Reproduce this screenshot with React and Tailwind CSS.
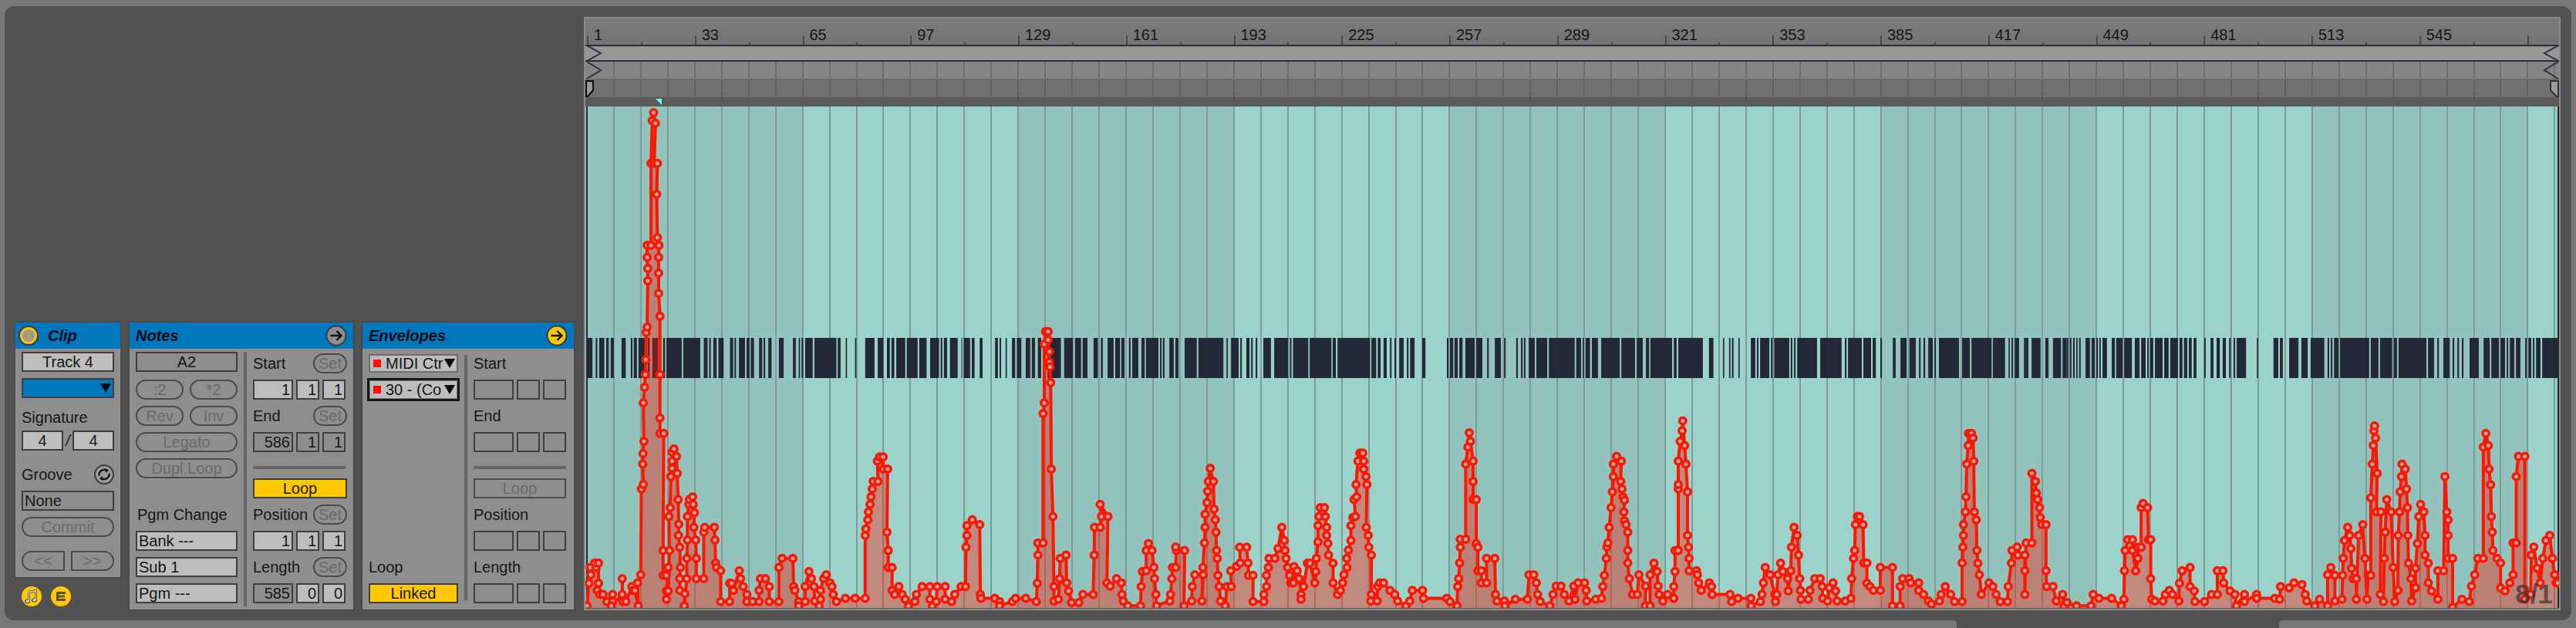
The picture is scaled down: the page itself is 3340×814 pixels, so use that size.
const GRID = Array.from({ length: 74 }, (_, i) => Math.round(761 + i * 34.95));
const BANDS = [
  [761, 1041, 0], [1041, 1321, 1], [1321, 1600, 0], [1600, 1880, 1], [1880, 2159, 0],
  [2159, 2439, 1], [2439, 2719, 0], [2719, 2999, 1], [2999, 3277, 0], [3277, 3318, 1],
];
const RULER = Array.from({ length: 18 }, (_, i) => 1 + i * 32);

// barcode runs, read off the zoomed crops as [origin, start, end, start, end...]
const BAR_RUNS = [
  [757, [10,27,37,42,48,64,70,78,84,94,118,131,147,152,156,166,171,191,200,206,214,232,248,254,258,306,311,364,375,387,392,397,405,415,421,437,457,467,471,476,485,504,509,518,522,532,548,558,562,567,577,587,610,625,654,663,672,676,681,686,692,716,721,790,794,803,819,823,848,852,880,909,919,937,948,957,962,971,977,1005,1010,1044,1049,1072,1083,1111,1116,1121,1126,1136,1145,1169,1181,1183,1188,1208,1213,1222,1238,1247,1286,1295,1300,1305,1319,1323,1339,1349,1354,1368,1382,1396,1401,1411,1420,1430,1450,1492,1502,1530,1536,1551]],
  [1400, [0,4,9,24,43,57,66,72,87,106,111,126,130,140,154,159,164,183,193,203,207,246,251,256,260,265,280,294,299,309,328,366,371,449,459,463,473,497,502,507,521,531,536,541,550,555,574,598,608,652,657,662,667,715,719,787,791,801,806,908,912,927,932,941,950,960,970,975,984,989,999,1013,1023,1028,1033,1047,1071,1081,1148,1153,1158,1168,1172,1182,1187,1197,1206,1235,1240,1259,1274,1279,1298,1317,1327,1332,1365,1370,1380,1385,1389,1394,1404,1423,1428,1462,1467,1544]],
  [2040, [0,4,9,24,29,33,38,52,58,77,87,145,150,193,198,217,227,237,241,309,314,323,328,405,424,438,468,472,487,491,496,501,516,520,555,569,574,579,584,613,618,623,628,675,680,685,690,695,700,762,772,839,849,854,859,902,907,931,936,946,960,965,999,1008,1023,1042,1051,1071,1081,1086,1095,1100,1110,1124,1129,1134,1143,1206,1216,1240,1245,1308,1312,1350,1361,1365,1370,1375,1380,1394,1409,1423,1433,1461,1476,1486,1500,1525,1530,1543]],
  [2680, [0,4,9,14,19,24,29,33,38,43,58,72,77,87,92,97,101,106,111,125,140,150,154,174,179,203,212,227,232,246,251,256,260,270,275,299,304,318,323,347,352,361,366,376,381,390,396,405,429,434,449,458,468,478,487,497,507,512,521,526,531,560,594,598,646,661,666,675,695,724,733,753,762,805,815,820,825,830,835,849,854,945,950,974,979,1017,1022,1032,1037,1124,1129,1148,1158,1163,1177,1197,1206,1211,1221,1226,1235,1240,1259,1288,1303,1322,1327,1351,1356,1370,1375,1380,1385,1399,1404,1418,1433,1438,1443,1452,1457,1462,1467,1481,1486,1535]],
];

// envelope breakpoints, same crops, as [origin, x, y, x, y...]
const ENV_RUNS = [
  [757, [10,1545,16,1476,22,1450,20,1428,38,1428,34,1414,46,1414,46,1476,42,1498,50,1510,60,1510,72,1532,90,1532,90,1510,86,1545,120,1510,120,1462,122,1532,132,1532,150,1486,154,1498,160,1498,170,1545,168,1475,178,1450,180,1188,186,1174,184,1112,185,1080,188,1042,186,925,190,877,192,838,194,792,195,710,198,693,200,552,200,514,198,480,198,443,210,443,210,193,214,62,218,38,224,70,220,193,230,193,228,287,230,420,235,443,234,480,234,528,234,590,238,660,238,838,238,971,238,1018,250,1018,248,1376,248,1452,258,1452,264,1428,258,1500,258,1525,264,1500,268,1376,266,1272,270,1245,272,1150,276,1125,276,1103,276,1075,282,1065,290,1088,292,1140,295,1220,297,1296,296,1330,300,1366,302,1428,300,1462,300,1498,316,1508,314,1545,322,1462,322,1400,324,1344,324,1272,328,1235,330,1220,340,1212,342,1235,346,1260,344,1305,350,1344,352,1400,352,1462,375,1462,375,1320,378,1305,408,1305,410,1344,412,1414,415,1428,428,1438,428,1532,456,1532,456,1476,462,1476,468,1498,486,1438,490,1462,498,1486,510,1510,510,1532,528,1532,548,1532,548,1498,552,1462,568,1462,580,1486,580,1532,610,1532,610,1428,620,1400,654,1400,656,1486,660,1498,672,1532,672,1545,692,1532,692,1486,704,1440,712,1462,720,1486,722,1530,736,1545,740,1525,740,1498,750,1462,758,1450,770,1475,776,1486,780,1510,790,1532,818,1522,848,1522,880,1522,880,1330,882,1310,888,1282,890,1258,895,1235,898,1212,902,1188,905,1165,920,1165,918,1103,925,1090,936,1090,936,1127,950,1127,948,1320,952,1376,952,1428,964,1428,964,1498,972,1510,985,1486,996,1510,1005,1525,1015,1545,1035,1532,1040,1510,1058,1486,1082,1486,1082,1525,1090,1545,1102,1532,1105,1486,1130,1486,1130,1525,1150,1532,1160,1510,1180,1486,1194,1486,1195,1366,1198,1330,1198,1300,1215,1282,1238,1297,1240,1510,1242,1522,1285,1522,1300,1532,1300,1545,1340,1532,1350,1522,1382,1522,1415,1532,1418,1476,1420,1390,1420,1353,1436,1353,1436,957,1440,925,1440,745,1444,707,1452,707,1452,732,1456,768,1456,800,1458,815,1460,863,1462,1127,1467,1272,1470,1486,1470,1530,1484,1525,1488,1462,1490,1400,1508,1390,1510,1475,1516,1500,1525,1535,1548,1535]],
  [1400, [10,1510,42,1510,45,1390,46,1305,64,1305,68,1272,64,1235,88,1272,85,1475,95,1485,115,1462,130,1475,132,1510,136,1530,150,1545,190,1545,192,1486,196,1440,208,1438,208,1376,215,1355,226,1376,232,1428,234,1462,238,1510,240,1545,282,1530,284,1510,288,1462,290,1428,300,1428,302,1376,300,1365,328,1376,326,1545,350,1530,352,1486,360,1450,386,1450,382,1530,385,1428,390,1353,392,1305,392,1265,398,1230,400,1195,402,1165,408,1125,418,1165,420,1250,424,1282,426,1320,428,1376,430,1400,432,1452,436,1486,440,1530,455,1545,460,1486,474,1486,472,1438,490,1425,502,1414,500,1366,522,1366,526,1414,528,1452,542,1452,542,1532,576,1532,576,1510,584,1486,584,1452,590,1428,592,1400,610,1400,620,1370,632,1305,640,1345,642,1376,645,1400,650,1428,656,1452,660,1475,668,1475,670,1425,680,1438,686,1462,692,1510,692,1525,700,1486,712,1415,720,1415,735,1475,738,1440,740,1400,745,1350,745,1300,748,1272,752,1245,765,1245,768,1272,772,1305,772,1330,776,1355,778,1390,792,1415,792,1475,806,1510,815,1498,822,1475,826,1450,836,1428,835,1400,840,1375,848,1345,848,1300,854,1275,862,1272,858,1220,866,1212,864,1174,870,1103,876,1078,885,1078,888,1103,888,1127,895,1150,898,1174,896,1305,902,1330,904,1366,912,1390,912,1510,910,1530,930,1530,932,1486,938,1475,950,1475,970,1498,985,1510,994,1530,1020,1545,1032,1530,1040,1498,1072,1498,1075,1522,1148,1522,1158,1532,1180,1545,1182,1486,1185,1462,1188,1414,1190,1366,1190,1342,1207,1342,1207,1112,1214,1060,1218,1016,1222,1042,1230,1103,1230,1165,1230,1220,1240,1220,1240,1355,1245,1366,1245,1438,1256,1438,1256,1475,1272,1475,1272,1400,1298,1400,1300,1510,1305,1530,1328,1530,1330,1545,1362,1525,1400,1525,1405,1450,1420,1450,1428,1475,1432,1510,1440,1532,1470,1545,1480,1510,1490,1485,1505,1485,1515,1510,1530,1530,1545,1485]],
  [2040, [5,1525,15,1475,35,1475,40,1498,42,1530,70,1525,88,1522,92,1486,97,1452,103,1400,105,1365,108,1353,112,1305,118,1245,122,1197,125,1150,125,1112,135,1088,150,1103,148,1165,152,1188,155,1212,160,1222,158,1258,160,1285,165,1297,170,1320,170,1376,170,1414,175,1462,185,1510,200,1510,205,1450,226,1485,225,1545,240,1545,240,1450,252,1415,262,1440,265,1485,268,1510,280,1530,295,1510,314,1522,314,1486,318,1440,318,1376,328,1376,328,1188,328,1174,328,1103,334,1042,340,1010,342,980,348,1055,352,1112,357,1197,357,1330,360,1366,362,1400,362,1438,385,1438,388,1450,392,1475,400,1498,425,1475,432,1486,434,1510,490,1510,495,1532,515,1522,555,1522,556,1545,585,1532,590,1510,594,1475,600,1428,615,1450,630,1510,632,1532,636,1510,640,1450,648,1415,655,1440,670,1462,672,1500,680,1438,682,1366,690,1305,700,1330,704,1390,708,1462,710,1498,712,1525,735,1525,740,1498,755,1462,772,1462,778,1486,780,1522,795,1530,800,1490,812,1475,820,1500,825,1530,850,1530,868,1522,870,1462,876,1400,880,1376,882,1297,888,1272,895,1272,906,1297,908,1414,918,1414,918,1476,928,1486,938,1498,960,1498,960,1428,998,1428,998,1545,1022,1545,1022,1486,1030,1462,1050,1462,1055,1475,1080,1475,1080,1498,1095,1510,1110,1530,1120,1540,1145,1530,1150,1510,1163,1486,1180,1510,1192,1532,1216,1532,1216,1414,1218,1366,1220,1330,1220,1297,1226,1258,1228,1212,1230,1112,1235,1055,1236,1018,1245,1018,1250,1032,1252,1103,1254,1258,1260,1282,1262,1376,1265,1415,1270,1450,1276,1510,1300,1475,1312,1486,1322,1510,1335,1532,1358,1532,1360,1486,1370,1415,1372,1376,1388,1365,1390,1390,1412,1390,1412,1438,1412,1510,1416,1353,1434,1353,1434,1140,1445,1165,1448,1200,1452,1220,1458,1245,1460,1275,1465,1297,1478,1297,1478,1438,1480,1486,1500,1486,1510,1530,1530,1510,1535,1545]],
  [2680, [0,1535,30,1545,75,1545,82,1510,100,1522,140,1522,170,1545,178,1525,180,1438,182,1376,190,1343,205,1343,205,1376,215,1438,222,1400,222,1366,232,1366,232,1245,238,1232,252,1245,255,1343,262,1343,262,1462,265,1525,275,1530,300,1530,308,1510,320,1498,330,1510,350,1530,352,1476,360,1438,385,1428,385,1486,398,1500,400,1532,430,1532,452,1510,470,1510,470,1438,488,1438,490,1475,510,1500,525,1510,530,1545,555,1510,555,1532,593,1510,593,1522,650,1522,665,1525,668,1486,695,1490,710,1475,735,1480,745,1510,750,1530,775,1545,790,1525,815,1545,815,1450,825,1428,838,1452,838,1530,860,1525,862,1452,864,1400,868,1345,878,1305,884,1330,888,1370,890,1430,895,1462,905,1462,905,1525,912,1330,925,1297,932,1400,938,1525,942,1452,950,1452,950,1215,955,1112,958,1055,960,1010,962,995,965,1032,970,1140,968,1258,982,1258,980,1510,990,1532,992,1400,995,1320,1000,1220,1014,1258,1020,1428,1025,1532,1035,1498,1036,1330,1040,1258,1042,1197,1046,1150,1048,1112,1058,1127,1062,1188,1065,1245,1066,1330,1068,1415,1076,1462,1078,1530,1090,1490,1090,1430,1096,1355,1100,1272,1106,1235,1116,1258,1120,1330,1120,1390,1130,1415,1130,1475,1140,1500,1160,1525,1160,1438,1178,1438,1182,1150,1188,1258,1192,1282,1192,1330,1192,1400,1206,1400,1206,1550,1235,1525,1258,1532,1265,1485,1275,1450,1285,1400,1302,1400,1302,1060,1310,1018,1318,1055,1320,1127,1325,1175,1327,1272,1330,1320,1332,1376,1345,1400,1356,1414,1356,1490,1370,1500,1385,1475,1395,1450,1395,1353,1405,1353,1405,1150,1412,1088,1432,1088,1432,1525,1450,1510,1452,1390,1460,1365,1470,1430,1480,1475,1488,1400,1498,1345,1510,1330,1518,1400,1525,1450,1530,1475,1535,1475]],
];

const toX = (origin, v) => +(origin + v / 2.412).toFixed(1);
const toY = (v) => +(130 + v / 2.358).toFixed(1);

const BARS = BAR_RUNS.flatMap(([origin, run]) => {
  const out = [];
  for (let i = 0; i < run.length; i += 2) out.push([toX(origin, run[i]), toX(origin, run[i + 1])]);
  return out;
});
const POINTS = ENV_RUNS.flatMap(([origin, run]) => {
  const out = [];
  for (let i = 0; i < run.length; i += 2) out.push([toX(origin, run[i]), toY(run[i + 1])]);
  return out;
});
const LINE = POINTS.map((p) => p.join(',')).join(' ');
const AREA = `761,788 ${LINE} 3316,788`;

function Field({ children, lit, align = 'center', className = '' }) {
  const justify = align === 'right' ? 'justify-end pr-[2px]' : align === 'left' ? 'justify-start pl-[2px]' : 'justify-center';
  return (
    <div className={`flex h-[26px] items-center border-2 border-[#3f3f3f] text-[20px] leading-none text-[#161616] ${justify} ${lit ? 'bg-[#bdbdbd]' : 'bg-[#8e8e8e]'} ${className}`}>
      {children}
    </div>
  );
}

function Pill({ children, className = '' }) {
  return (
    <div className={`flex h-[26px] items-center justify-center rounded-full border-2 border-[#4a4a4a] text-[20px] leading-none text-[#6a6a6a] ${className}`}>
      {children}
    </div>
  );
}

function Cells({ values = ['', '', ''], lit = [false, false, false] }) {
  return (
    <div className="mt-2 flex w-[120px] gap-1">
      <Field align="right" lit={lit[0]} className="w-[52px]">{values[0]}</Field>
      <Field align="right" lit={lit[1]} className="w-[30px]">{values[1]}</Field>
      <Field align="right" lit={lit[2]} className="w-[30px]">{values[2]}</Field>
    </div>
  );
}

function LabelRow({ label, set, className = 'mt-2' }) {
  return (
    <div className={`flex h-[26px] items-center justify-between ${className}`}>
      <span className="text-[20px] leading-none text-[#161616]">{label}</span>
      {set && <Pill className="w-[44px]">Set</Pill>}
    </div>
  );
}

function LoopColumn({ start, end, position, length, startLit, posLit, lengthLit, loopOn, set }) {
  return (
    <div className="ml-2 w-[122px] pt-[6px]">
      <LabelRow label="Start" set={set} className="" />
      <Cells values={start} lit={startLit} />
      <LabelRow label="End" set={set} />
      <Cells values={end} />
      <div className="mt-[18px] h-1 w-[120px] bg-[#666666]" />
      <div className={`mt-3 flex h-[26px] items-center justify-center border-2 text-[20px] leading-none ${loopOn ? 'border-[#3f3f3f] bg-[#ffc800] text-[#161616]' : 'w-[120px] border-[#4a4a4a] text-[#6a6a6a]'}`}>Loop</div>
      <LabelRow label="Position" set={set} />
      <Cells values={position} lit={posLit} />
      <LabelRow label="Length" set={set} />
      <Cells values={length} lit={lengthLit} />
    </div>
  );
}

function PanelHeader({ title, children }) {
  return (
    <div className="flex h-[34px] items-center bg-[#0076bc] px-2">
      {children?.[0]}
      <span className="text-[20px] font-bold italic leading-none text-[#0a0a14]">{title}</span>
      <span className="ml-auto">{children?.[1]}</span>
    </div>
  );
}

function ArrowButton({ fill }) {
  return (
    <svg width="28" height="28" viewBox="0 0 28 28" className="block">
      <circle cx="14" cy="14" r="12.5" fill={fill} stroke="#3c3c3c" strokeWidth="2" />
      <path d="M6.5 14H20M14.5 8l6 6-6 6" fill="none" stroke="#0c0c0c" strokeWidth="2.4" />
    </svg>
  );
}

function ToggleIcon() {
  return (
    <svg width="26" height="26" viewBox="0 0 26 26" className="mr-3 -ml-1 block shrink-0">
      <circle cx="13" cy="13" r="12" fill="#ffc800" stroke="#3c3c3c" strokeWidth="2" />
      <circle cx="13" cy="13" r="8" fill="#9a9a9a" />
      <rect x="12" y="7.5" width="2" height="11" fill="#c9a21c" />
    </svg>
  );
}

function GrooveIcon() {
  return (
    <svg width="26" height="26" viewBox="0 0 26 26" className="block">
      <circle cx="13" cy="13" r="12" fill="#9a9a9a" stroke="#3c3c3c" strokeWidth="2" />
      <path d="M6.5 14.5a6.5 6.5 0 0 1 10-6.5M19.5 11.5a6.5 6.5 0 0 1-10 6.5" fill="none" stroke="#111111" strokeWidth="2.2" />
      <path d="M14.5 5l4.5 2.5-3.5 3.5zM11.5 21l-4.5-2.5 3.5-3.5z" fill="#111111" />
    </svg>
  );
}

function NoteIcon() {
  return (
    <svg width="26" height="26" viewBox="0 0 26 26" className="block">
      <circle cx="13" cy="13" r="13" fill="#ffc800" />
      <path d="M9.5 7.5l9-1.8v12M9.5 7.5v12" fill="none" stroke="#4a4a4a" strokeWidth="3" />
      <ellipse cx="7.5" cy="19.5" rx="3.4" ry="2.8" fill="#4a4a4a" />
      <ellipse cx="16.5" cy="18" rx="3.4" ry="2.8" fill="#4a4a4a" />
      <path d="M9.5 7.5l9-1.8v12M9.5 7.5v12" fill="none" stroke="#d9d9d9" strokeWidth="1.4" />
      <ellipse cx="7.5" cy="19.5" rx="2.2" ry="1.7" fill="#d9d9d9" />
      <ellipse cx="16.5" cy="18" rx="2.2" ry="1.7" fill="#d9d9d9" />
    </svg>
  );
}

function AudioIcon() {
  return (
    <svg width="26" height="26" viewBox="0 0 26 26" className="block">
      <circle cx="13" cy="13" r="13" fill="#ffc800" />
      <path d="M7 7h12v3h-9v1.5h8v3h-8V16h9v3H7z" fill="#5a5238" />
    </svg>
  );
}

function Triangle() {
  return <span className="h-0 w-0 shrink-0 border-x-[7px] border-t-[12px] border-x-transparent border-t-[#0a0a0a]" />;
}

function ClipColumn() {
  return (
    <div className="flex w-[136px] flex-col">
      <div className="h-[330px] bg-[#8e8e8e] outline-2 outline-[#4a4a4a]">
        <PanelHeader title="Clip">
          {[<ToggleIcon key="t" />, null]}
        </PanelHeader>
        <div className="px-2 pt-1">
          <Field lit>Track 4</Field>
          <div className="mt-2 flex h-[26px] items-center justify-end border-2 border-[#3f3f3f] bg-[#0076bc] pr-[2px]">
            <Triangle />
          </div>
          <div className="mt-[12px] h-[26px] text-[20px] leading-[26px] text-[#161616]">Signature</div>
          <div className="mt-1 flex items-center justify-between">
            <Field lit className="w-[54px]">4</Field>
            <span className="text-[20px] italic leading-none text-[#161616]">/</span>
            <Field lit className="w-[54px]">4</Field>
          </div>
          <div className="mt-[18px] flex h-[26px] items-center justify-between">
            <span className="text-[20px] leading-none text-[#161616]">Groove</span>
            <GrooveIcon />
          </div>
          <Field align="left" className="mt-[8px]">None</Field>
          <Pill className="mt-2">Commit</Pill>
          <div className="mt-[18px] flex justify-between">
            <div className="flex h-[26px] w-[56px] items-center justify-center rounded-l-full border-2 border-[#4a4a4a] text-[20px] leading-none text-[#6a6a6a]">&lt;&lt;</div>
            <div className="flex h-[26px] w-[56px] items-center justify-center rounded-r-full border-2 border-[#4a4a4a] text-[20px] leading-none text-[#6a6a6a]">&gt;&gt;</div>
          </div>
        </div>
      </div>
      <div className="mt-3 flex gap-3 pl-2">
        <NoteIcon />
        <AudioIcon />
      </div>
    </div>
  );
}

function NotesPanel() {
  return (
    <div className="h-[372px] w-[290px] bg-[#8e8e8e] outline-2 outline-[#4a4a4a]">
      <PanelHeader title="Notes">
        {[null, <ArrowButton key="a" fill="#8e8e8e" />]}
      </PanelHeader>
      <div className="flex h-[338px]">
        <div className="ml-2 w-[132px] pt-1">
          <Field>A2</Field>
          <div className="mt-[10px] flex gap-2">
            <Pill className="flex-1">:2</Pill>
            <Pill className="flex-1">*2</Pill>
          </div>
          <div className="mt-2 flex gap-2">
            <Pill className="flex-1">Rev</Pill>
            <Pill className="flex-1">Inv</Pill>
          </div>
          <Pill className="mt-2">Legato</Pill>
          <Pill className="mt-2">Dupl.Loop</Pill>
          <div className="mt-[35px] h-6 pl-[2px] text-[20px] leading-6 text-[#161616]">Pgm Change</div>
          <Field lit align="left" className="mt-[9px]">Bank ---</Field>
          <Field lit align="left" className="mt-2">Sub 1</Field>
          <Field lit align="left" className="mt-2">Pgm ---</Field>
        </div>
        <div className="mb-1 ml-2 mt-1 w-1 bg-[#666666]" />
        <LoopColumn
          set
          loopOn
          start={['1', '1', '1']}
          startLit={[true, true, true]}
          end={['586', '1', '1']}
          position={['1', '1', '1']}
          posLit={[true, true, true]}
          length={['585', '0', '0']}
          lengthLit={[false, true, true]}
        />
      </div>
    </div>
  );
}

function EnvelopesPanel() {
  return (
    <div className="h-[372px] w-[274px] bg-[#8e8e8e] outline-2 outline-[#4a4a4a]">
      <PanelHeader title="Envelopes">
        {[null, <ArrowButton key="a" fill="#ffc800" />]}
      </PanelHeader>
      <div className="flex h-[338px]">
        <div className="ml-[6px] flex w-[120px] flex-col pb-2 pt-[7px]">
          <div className="mx-[2px] flex h-6 items-center border-2 border-[#6e6e6e] bg-[#bdbdbd] pl-[4px] pr-[2px] text-[20px] leading-none text-[#161616]">
            <span className="mr-[6px] h-[10px] w-[10px] shrink-0 bg-[#ff0f00]" />
            <span className="whitespace-nowrap">MIDI Ctr</span>
            <span className="ml-auto flex"><Triangle /></span>
          </div>
          <div className="mt-[7px] flex h-[30px] items-center border-[3px] border-[#161616] bg-[#bdbdbd] pl-[5px] pr-[3px] text-[20px] leading-none text-[#161616] ring-1 ring-inset ring-[#7a7a7a]">
            <span className="mr-[6px] h-[10px] w-[10px] shrink-0 bg-[#ff0f00]" />
            <span className="whitespace-nowrap">30 - (Co</span>
            <span className="ml-auto flex"><Triangle /></span>
          </div>
          <div className="mx-[2px] mt-auto h-6 text-[20px] leading-6 text-[#161616]">Loop</div>
          <div className="mx-[2px] mt-[9px] flex h-[26px] items-center justify-center border-2 border-[#3f3f3f] bg-[#ffc800] text-[20px] leading-none text-[#161616]">Linked</div>
        </div>
        <div className="mb-3 ml-[6px] mt-2 w-1 bg-[#666666]" />
        <LoopColumn />
      </div>
    </div>
  );
}

function Ruler() {
  return (
    <div className="flex h-[34px] bg-gradient-to-b from-[#7c7c7c] to-[#747474] pl-[2px]">
      {RULER.map((bar) => (
        <div key={bar} className="flex w-[139.75px] shrink-0 items-end">
          <div className="flex w-1/2 items-end">
            <div className="h-3 w-[2px] bg-[#4a4a4a]" />
            <span className="mb-[3px] ml-[7px] text-[20px] leading-none text-[#161616]">{bar}</span>
          </div>
          <div className="h-[3px] w-[2px] bg-[#4a4a4a]" />
        </div>
      ))}
      <div className="h-3 w-[2px] self-end bg-[#4a4a4a]" />
    </div>
  );
}

function StripLines({ top, height, color }) {
  return (
    <svg className="absolute inset-0" width="2559" height={height} viewBox={`759 ${top} 2559 ${height}`}>
      {GRID.slice(1).map((x) => (
        <rect key={x} x={x - 1} y={top} width="2" height={height} fill={color} />
      ))}
    </svg>
  );
}

function Strips() {
  return (
    <div>
      <div className="relative h-[22px] border-y-2 border-[#2b2f3d] bg-[#979797]">
        <svg className="absolute inset-0" width="2559" height="18" viewBox="759 60 2559 18">
          <path d="M761 59l18 10-18 10M3317 59l-18 10 18 10" fill="none" stroke="#2f3342" strokeWidth="2" />
        </svg>
      </div>
      <div className="relative h-[24px] border-b-2 border-[#696969] bg-[#858585]">
        <StripLines top={80} height={22} color="#6f6f6f" />
        <svg className="absolute inset-0" width="2559" height="22" viewBox="759 80 2559 22">
          <path d="M761 80l18 11-18 11M3317 80l-18 11 18 11" fill="none" stroke="#2f3342" strokeWidth="2" />
        </svg>
      </div>
      <div className="relative h-[22px] bg-[#717171]">
        <StripLines top={104} height={22} color="#606060" />
        <svg className="absolute inset-0" width="2559" height="22" viewBox="759 104 2559 22">
          <path d="M760 105h9v12l-8 9h-1z" fill="#9a9a9a" stroke="#0c0c0c" strokeWidth="2" />
          <path d="M3317 105h-10v12l9 9h1z" fill="#9a9a9a" stroke="#2b2f3d" strokeWidth="2" />
        </svg>
      </div>
      <div className="relative h-3 bg-[#5a5a5a]">
        <svg className="absolute inset-0" width="2559" height="12" viewBox="759 126 2559 12">
          <path d="M850 128h8v8z" fill="#7ff3f3" />
        </svg>
      </div>
    </div>
  );
}

function Chart() {
  return (
    <div className="relative h-[650px] bg-[#9bd2c9]">
      <svg className="block" width="2559" height="650" viewBox="759 138 2559 650">
        {BANDS.map(([a, b, light]) => (
          <rect key={a} x={a} y="138" width={b - a} height="650" fill={light ? '#9bd2c9' : '#92c3bc'} />
        ))}
        {GRID.slice(1).map((x) => (
          <rect key={x} x={x - 1} y="138" width="2" height="650" fill="#7e9c97" />
        ))}
        {BARS.map(([a, b]) => (
          <rect key={a} x={a} y="438" width={Math.max(b - a, 1)} height="52" fill="#232836" />
        ))}
        <rect x="760" y="138" width="2" height="650" fill="#232836" />
        <rect x="3316" y="138" width="2" height="650" fill="#232836" />
        <polygon points={AREA} fill="#ff1000" fillOpacity="0.37" />
        <polyline points={LINE} fill="none" stroke="#ff1500" strokeWidth="4" strokeLinejoin="round" />
        {POINTS.map(([x, y], i) => (
          <circle key={i} cx={x} cy={y} r="4.25" fill="#b4a8a8" stroke="#ff1500" strokeWidth="3.5" />
        ))}
      </svg>
      <span className="absolute bottom-px right-2 text-[35px] font-bold leading-none text-[#3a2f2f]/70">8/1</span>
    </div>
  );
}

export default function App() {
  return (
    <div className="h-[814px] w-[3340px] overflow-hidden bg-[#787878] px-[6px] pt-2 [font-family:'Liberation_Sans',Arial,sans-serif]">
      <div className="flex h-[796px] rounded-[12px] bg-[#525252] pb-[13px] pl-[14px] pr-[14px] pt-[14px]">
        <div className="flex items-start gap-3 pt-[396px]">
          <ClipColumn />
          <NotesPanel />
          <EnvelopesPanel />
        </div>
        <div className="ml-[13px] w-[2563px] border-2 border-[#8a8a8a] bg-[#5a5a5a]">
          <Ruler />
          <Strips />
          <Chart />
        </div>
      </div>
      <div className="flex h-[10px] bg-[#525252]">
        <div className="w-[2531px] rounded-tr-[5px] bg-[#787878]" />
        <div className="w-[418px]" />
        <div className="flex-1 rounded-tl-[5px] bg-[#787878]" />
      </div>
    </div>
  );
}
